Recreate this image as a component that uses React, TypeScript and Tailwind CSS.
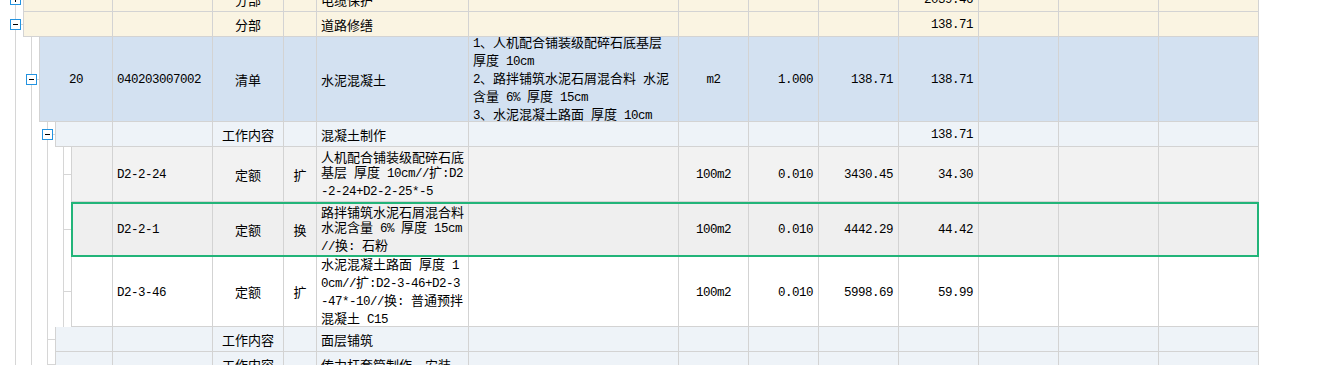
import React from "react";

type Depth = 0 | 1 | 2 | 3;
type Cell = string[] | undefined;
type RowData = {
  depth: Depth;
  h: number;
  hClass: string;
  bg: string;
  box?: "+" | "-";
  levels: number[];
  cells: Cell[];
  selected?: boolean;
};

const GUTTER: Record<Depth, string> = {
  0: "w-[23px]",
  1: "w-[39px]",
  2: "w-[55px]",
  3: "w-[71px]",
};
const FIRST: Record<Depth, string> = {
  0: "w-[89px]",
  1: "w-[73px]",
  2: "w-[57px]",
  3: "w-[41px]",
};
const COLW = [
  "",
  "w-[100px]",
  "w-[71px]",
  "w-[33px]",
  "w-[152px]",
  "w-[210px]",
  "w-[70px]",
  "w-[70px]",
  "w-[80px]",
  "w-[80px]",
  "w-[80px]",
  "w-[100px]",
  "w-[100px]",
];
const ALIGN = [
  "items-center",
  "items-start pl-[4px]",
  "items-center",
  "items-center",
  "items-start pl-[4px]",
  "items-start pl-[4px]",
  "items-center",
  "items-end pr-[5px]",
  "items-end pr-[5px]",
  "items-end pr-[5px]",
  "items-center",
  "items-center",
  "items-center",
];

function Txt({ s }: { s: string }) {
  const parts = s.split(/([\x20-\x7e]+)/).filter((p) => p.length > 0);
  return (
    <>
      {parts.map((p, i) =>
        /^[\x20-\x7e]+$/.test(p) ? (
          <span key={i} className="font-['Liberation_Mono',monospace] text-[12.5px] tracking-[-0.5px]">
            {p}
          </span>
        ) : (
          <span key={i}>{p}</span>
        )
      )}
    </>
  );
}

function Tree({ depth, h, box, levels }: { depth: Depth; h: number; box?: "+" | "-"; levels: number[] }) {
  const rs = 23 + 16 * depth;
  const c = Math.floor((h - 1) / 2);
  const bx = 10 + 16 * depth;
  const line = "#d6d6d6";
  return (
    <svg width={rs} height={h} className="block" shapeRendering="crispEdges">
      {levels.map((k) => (
        <rect key={k} x={15 + 16 * k} y={0} width={1} height={h} fill={line} />
      ))}
      {box ? (
        <>
          <rect x={bx + 11} y={c} width={rs - bx - 11} height={1} fill={line} />
          <rect x={bx + 0.5} y={c - 5 + 0.5} width={10} height={10} fill="#ffffff" stroke="#2393e0" strokeWidth={1} />
          <rect x={bx + 3} y={c} width={5} height={1} fill="#000000" />
          {box === "+" && <rect x={bx + 5} y={c - 2} width={1} height={5} fill="#000000" />}
        </>
      ) : (
        <rect x={15 + 16 * depth} y={c} width={rs - 15 - 16 * depth} height={1} fill={line} />
      )}
    </svg>
  );
}

const rows: RowData[] = [
  {
    depth: 0,
    h: 25,
    hClass: "h-[25px]",
    bg: "bg-[#faf4e2]",
    box: "+",
    levels: [0],
    cells: [undefined, undefined, ["分部"], undefined, ["电缆保护"], undefined, undefined, undefined, undefined, ["2039.46"]],
  },
  {
    depth: 0,
    h: 25,
    hClass: "h-[25px]",
    bg: "bg-[#faf4e2]",
    box: "-",
    levels: [0],
    cells: [undefined, undefined, ["分部"], undefined, ["道路修缮"], undefined, undefined, undefined, undefined, ["138.71"]],
  },
  {
    depth: 1,
    h: 85,
    hClass: "h-[85px]",
    bg: "bg-[#d3e1f1]",
    box: "-",
    levels: [0, 1],
    cells: [
      ["20"],
      ["040203007002"],
      ["清单"],
      undefined,
      ["水泥混凝土"],
      [
        "1、人机配合铺装级配碎石底基层",
        "厚度 10cm",
        "2、路拌铺筑水泥石屑混合料 水泥",
        "含量 6% 厚度 15cm",
        "3、水泥混凝土路面 厚度 10cm",
      ],
      ["m2"],
      ["1.000"],
      ["138.71"],
      ["138.71"],
    ],
  },
  {
    depth: 2,
    h: 25,
    hClass: "h-[25px]",
    bg: "bg-[#eef3f8]",
    box: "-",
    levels: [0, 1, 2],
    cells: [undefined, undefined, ["工作内容"], undefined, ["混凝土制作"], undefined, undefined, undefined, undefined, ["138.71"]],
  },
  {
    depth: 3,
    h: 55,
    hClass: "h-[55px]",
    bg: "bg-[#f2f2f2]",
    levels: [0, 1, 2, 3],
    cells: [
      undefined,
      ["D2-2-24"],
      ["定额"],
      ["扩"],
      ["人机配合铺装级配碎石底", "基层 厚度 10cm//扩:D2", "-2-24+D2-2-25*-5"],
      undefined,
      ["100m2"],
      ["0.010"],
      ["3430.45"],
      ["34.30"],
    ],
  },
  {
    depth: 3,
    h: 55,
    hClass: "h-[55px]",
    bg: "bg-[#efefef]",
    levels: [0, 1, 2, 3],
    selected: true,
    cells: [
      undefined,
      ["D2-2-1"],
      ["定额"],
      ["换"],
      ["路拌铺筑水泥石屑混合料", "水泥含量 6% 厚度 15cm", "//换: 石粉"],
      undefined,
      ["100m2"],
      ["0.010"],
      ["4442.29"],
      ["44.42"],
    ],
  },
  {
    depth: 3,
    h: 70,
    hClass: "h-[70px]",
    bg: "bg-white",
    levels: [0, 1, 2, 3],
    cells: [
      undefined,
      ["D2-3-46"],
      ["定额"],
      ["扩"],
      ["水泥混凝土路面 厚度 1", "0cm//扩:D2-3-46+D2-3", "-47*-10//换: 普通预拌", "混凝土 C15"],
      undefined,
      ["100m2"],
      ["0.010"],
      ["5998.69"],
      ["59.99"],
    ],
  },
  {
    depth: 2,
    h: 25,
    hClass: "h-[25px]",
    bg: "bg-[#eef3f8]",
    levels: [0, 1, 2],
    cells: [undefined, undefined, ["工作内容"], undefined, ["面层铺筑"]],
  },
  {
    depth: 2,
    h: 25,
    hClass: "h-[25px]",
    bg: "bg-[#eef3f8]",
    levels: [0, 1, 2],
    cells: [undefined, undefined, ["工作内容"], undefined, ["传力杆套筒制作、安装"]],
  },
];

function Row({ r }: { r: RowData }) {
  return (
    <div className={`flex shrink-0 ${r.hClass}`}>
      <div className={`${GUTTER[r.depth]} shrink-0 bg-white`}>
        <Tree depth={r.depth} h={r.h} box={r.box} levels={r.levels} />
      </div>
      <div className={`relative flex border-l border-b border-[#d3d3d3] ${r.bg}`}>
        {COLW.map((w, i) => {
          const content = r.cells[i];
          return (
            <div
              key={i}
              className={`${i === 0 ? FIRST[r.depth] : w} shrink-0 border-r border-[#d3d3d3] flex flex-col justify-center overflow-hidden ${ALIGN[i]}`}
            >
              {content?.map((ln, j) => (
                <div key={j} className="whitespace-pre leading-[15px]">
                  <Txt s={ln} />
                </div>
              ))}
            </div>
          );
        })}
        {r.selected && (
          <div className="pointer-events-none absolute -left-px top-0 right-0 -bottom-px border-2 border-[#22b479]" />
        )}
      </div>
    </div>
  );
}

export default function App() {
  return (
    <div className="w-[1337px] h-[365px] overflow-hidden bg-white text-[13px] text-black font-['Noto_Sans_CJK_SC',sans-serif]">
      <div className="-mt-[14px] flex flex-col">
        <div className="h-px shrink-0" />
        {rows.map((r, i) => (
          <Row key={i} r={r} />
        ))}
      </div>
    </div>
  );
}
